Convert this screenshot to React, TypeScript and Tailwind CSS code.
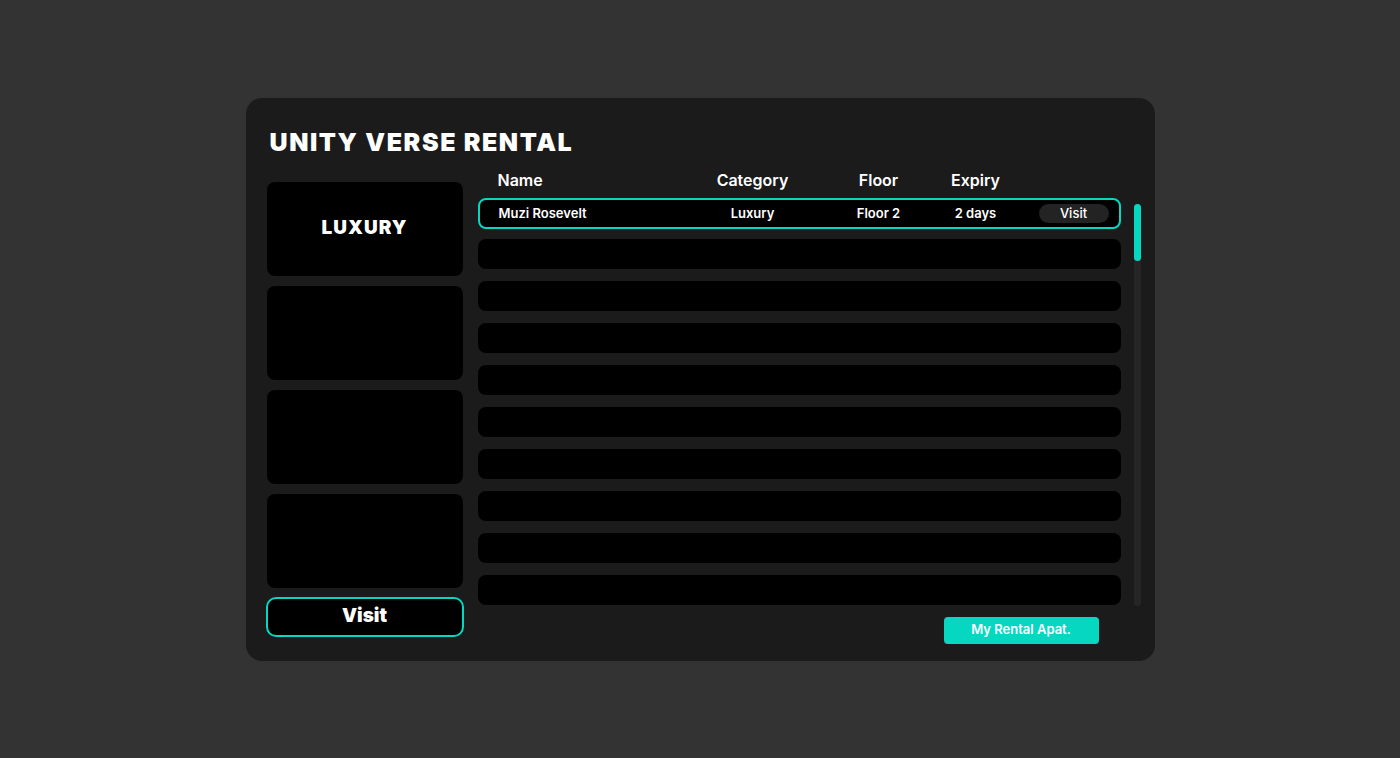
const ROWS = Array.from({ length: 9 }, (_, i) => i);

export default function App() {
  return (
    <div className="h-screen w-full bg-[#333333] flex items-center justify-center font-['Inter',sans-serif] text-white">
      <div className="w-[909px] h-[563px] bg-[#1b1b1b] rounded-[16px] pl-[21px] pr-[14px] pt-[29px]">
        {/* Title */}
        <h1 className="ml-[3px] h-[30px] text-[25px] leading-[30px] font-black tracking-[1.6px]">UNITY VERSE RENTAL</h1>

        <div className="flex mt-[13px] gap-[15px]">
          {/* Categories */}
          <div className="w-[196px] shrink-0 pt-[12px] flex flex-col">
            <div className="flex flex-col gap-[10px]">
              <div className="h-[94px] bg-black rounded-[8px] flex items-center justify-center text-[19px] font-black tracking-[1px]">LUXURY</div>
              <div className="h-[94px] bg-black rounded-[8px]" />
              <div className="h-[94px] bg-black rounded-[8px]" />
              <div className="h-[94px] bg-black rounded-[8px]" />
            </div>
            <button className="mt-[9px] -mx-px h-[40px] bg-black border-2 border-[#06d7c1] rounded-[10px] text-[19px] font-black">Visit</button>
          </div>

          {/* List */}
          <div className="w-[663px] shrink-0 flex flex-col">
            <div className="flex h-[29px] w-[643px] text-[16px] font-semibold leading-[20px]">
              <div className="w-[212px] pl-[20px]">Name</div>
              <div className="w-[126px] text-center">Category</div>
              <div className="w-[126px] text-center">Floor</div>
              <div className="w-[68px] text-center">Expiry</div>
            </div>

            <div className="flex gap-[13px]">
              <div className="w-[643px] flex flex-col">
                <div className="h-[31px] bg-black border-2 border-[#06d7c1] rounded-[8px] flex items-center text-[13px] font-semibold -mt-px pt-px">
                  <div className="w-[210px] pl-[19px]">Muzi Rosevelt</div>
                  <div className="w-[126px] text-center">Luxury</div>
                  <div className="w-[126px] text-center">Floor 2</div>
                  <div className="w-[68px] text-center">2 days</div>
                  <div className="pl-[29px]">
                    <div className="w-[70px] h-[19px] rounded-full bg-[#232323] flex items-center justify-center text-[13px] font-medium">Visit</div>
                  </div>
                </div>
                <div className="mt-[10px] flex flex-col gap-[12px]">
                  {ROWS.map(r => (
                    <div key={r} className="h-[30px] bg-black rounded-[8px]" />
                  ))}
                </div>
              </div>
              <div className="mt-[5px] w-[7px] h-[402px] rounded-full bg-[#262626]">
                <div className="h-[57px] rounded-full bg-[#06d7c1]" />
              </div>
            </div>

            <div className="w-[643px] flex justify-end pr-[22px] mt-[11px]">
              <button className="w-[155px] h-[27px] rounded-[4px] bg-[#06d7c1] text-[13px] font-semibold">My Rental Apat.</button>
            </div>
          </div>
        </div>
      </div>
    </div>
  );
}
